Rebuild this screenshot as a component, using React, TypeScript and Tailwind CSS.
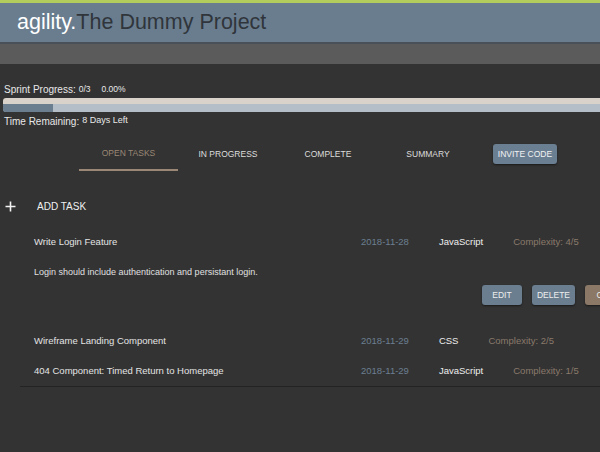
import React from "react";

const tasks = [
  { title: "Write Login Feature", date: "2018-11-28", lang: "JavaScript", cx: "4/5" },
  { title: "Wireframe Landing Component", date: "2018-11-29", lang: "CSS", cx: "2/5" },
  { title: "404 Component: Timed Return to Homepage", date: "2018-11-29", lang: "JavaScript", cx: "1/5" },
];

function TaskRow({ t }: { t: (typeof tasks)[number] }) {
  return (
    <div className="h-[20px] flex items-center pl-[34px] text-[9.5px] whitespace-nowrap">
      <div className="w-[327px] shrink-0 text-[#e4e4e4]">{t.title}</div>
      <div className="flex items-center gap-[30px]">
        <span className="text-[#6c7f91]">{t.date}</span>
        <span className="text-[#eeeeee]">{t.lang}</span>
        <span className="text-[#8a7a6b]">Complexity: {t.cx}</span>
      </div>
    </div>
  );
}

export default function App() {
  return (
    <div className="w-[600px] h-[452px] overflow-hidden bg-[#333333] font-['Liberation_Sans',Arial,sans-serif] text-[#e8e8e8]">
      <div className="h-[3px] bg-[#b3cd5c]" />
      <div className="h-[39px] bg-[#697d8f] flex items-center pl-[17px] text-[21.5px] leading-none whitespace-nowrap">
        <span className="text-white">agility.</span>
        <span className="text-[#30353b]">The Dummy Project</span>
      </div>
      <div className="h-[2px] bg-[#4a5058]" />
      <div className="h-[20px] bg-[#5b5b5b]" />

      <div className="pl-[4px]">
        <div className="h-[18px] mt-[16px] flex items-center whitespace-nowrap">
          <span className="text-[10px]">Sprint Progress:</span>
          <span className="text-[8.5px] ml-[3px]">0/3</span>
          <span className="text-[8.5px] ml-[11px]">0.00%</span>
        </div>
        <div className="w-[640px] h-[14px] -ml-[1px] rounded-l-[3px] overflow-hidden flex flex-col">
          <div className="h-[6px] bg-[#d8d2cb]" />
          <div className="h-[8px] bg-[#b3bec9] flex">
            <div className="w-[50px] bg-[#6a7e90]" />
          </div>
        </div>
        <div className="h-[18px] flex items-center whitespace-nowrap">
          <span className="text-[10px]">Time Remaining:</span>
          <span className="text-[9px] ml-[3px]">8 Days Left</span>
        </div>

        <div className="mt-[8px] flex items-start ml-[75px] text-[8.5px] uppercase whitespace-nowrap">
          <div className="w-[99px] h-[33px] flex items-center justify-center border-b-2 border-[#9a8775] text-[#9a8775]">
            Open Tasks
          </div>
          <div className="w-[100px] h-[33px] flex items-center justify-center text-[#dddddd]">In Progress</div>
          <div className="w-[100px] h-[33px] flex items-center justify-center text-[#dddddd]">Complete</div>
          <div className="w-[100px] h-[33px] flex items-center justify-center text-[#dddddd]">Summary</div>
          <div className="ml-[15px] mt-[6px] w-[64px] h-[20px] rounded-[3px] bg-[#6b7f92] flex items-center justify-center text-[#f2f2f2] shadow-[0_1px_2px_rgba(0,0,0,0.5)]">
            Invite Code
          </div>
        </div>
      </div>

      <div className="mt-[25px] h-[20px] flex items-center pl-[5px]">
        <svg width="11" height="11" viewBox="0 0 11 11">
          <path d="M5.5 0.5v10M0.5 5.5h10" stroke="#f2f2f2" strokeWidth="1.6" />
        </svg>
        <span className="ml-[21px] text-[10px] text-[#f0f0f0]">ADD TASK</span>
      </div>

      <div className="mt-[16px]">
        <TaskRow t={tasks[0]} />
      </div>
      <div className="mt-[11px] h-[20px] flex items-center pl-[34px] text-[9px] text-[#e0e0e0] whitespace-nowrap">
        Login should include authentication and persistant login.
      </div>
      <div className="mt-[2px] w-[663px] flex justify-end gap-[10px] pr-[8px] text-[8.5px] text-[#eeeeee]">
        <div className="w-[40px] h-[20px] rounded-[3px] bg-[#6a7e90] flex items-center justify-center shadow-[0_1px_2px_rgba(0,0,0,0.5)]">
          EDIT
        </div>
        <div className="w-[43px] h-[20px] rounded-[3px] bg-[#6a7e90] flex items-center justify-center shadow-[0_1px_2px_rgba(0,0,0,0.5)]">
          DELETE
        </div>
        <div className="w-[70px] h-[20px] rounded-[3px] bg-[#8b7866] flex items-center justify-center shadow-[0_1px_2px_rgba(0,0,0,0.5)]">
          COMPLETE
        </div>
      </div>

      <div className="mt-[26px]">
        <TaskRow t={tasks[1]} />
      </div>
      <div className="mt-[10px]">
        <TaskRow t={tasks[2]} />
      </div>
      <div className="mt-[5px] ml-[20px] h-[1px] bg-[#232323]" />
    </div>
  );
}
